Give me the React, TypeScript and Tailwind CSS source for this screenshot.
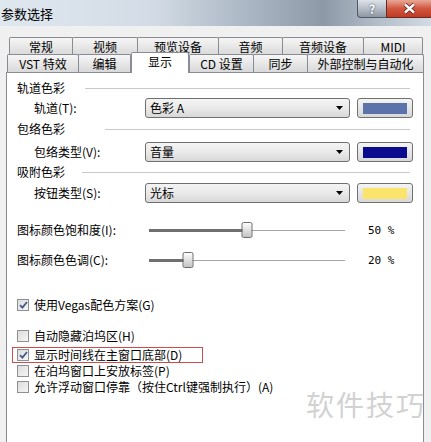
const FONT = "font-['Noto_Sans_CJK_SC','Microsoft_YaHei',sans-serif]";

const row1 = [
  { label: "常规", w: 64 },
  { label: "视频", w: 66 },
  { label: "预览设备", w: 82 },
  { label: "音频", w: 65 },
  { label: "音频设备", w: 82 },
  { label: "MIDI", w: 60 },
];

const row2 = [
  { label: "VST 特效", w: 72 },
  { label: "编辑", w: 53 },
  { label: "显示", w: 58, active: true },
  { label: "CD 设置", w: 65 },
  { label: "同步", w: 55 },
  { label: "外部控制与自动化", w: 117 },
];

function Tab({ label, w, active, first }: { label: string; w: number; active?: boolean; first?: boolean }) {
  if (active) {
    return (
      <div
        style={{ width: w }}
        className="relative z-10 -mb-px flex h-[21px] items-start justify-center rounded-t-[2px] border border-b-0 border-[#898c95] bg-white pt-[2px] text-[12px] leading-[14px] text-black"
      >
        {label}
      </div>
    );
  }
  return (
    <div
      style={{ width: w }}
      className={`flex h-[18px] items-center justify-center rounded-t-[2px] border border-b-0 border-[#898c95] bg-gradient-to-b from-[#f6f6f6] to-[#d9d9d9] pt-[1px] text-[12px] leading-none text-black ${first ? "" : "-ml-px"}`}
    >
      {label}
    </div>
  );
}

function GroupHeader({ label, lineLeft, mt }: { label: string; lineLeft: string; mt: string }) {
  return (
    <div className={`flex h-[14px] items-center pl-[10px] ${mt}`}>
      <span className="text-[12px] leading-none">{label}</span>
      <div className={`mr-[13px] h-px flex-1 bg-[#c9c9c9] ${lineLeft}`} />
    </div>
  );
}

function ColorRow({ label, value, swatch, mt }: { label: string; value: string; swatch: string; mt: string }) {
  return (
    <div className={`flex h-[20px] items-center ${mt}`}>
      <div className="w-[138px] pl-[27px] text-[12px] leading-none">{label}</div>
      <div className="flex h-[20px] w-[205px] items-center justify-between rounded-[3px] border border-[#707070] bg-gradient-to-b from-[#f4f4f4] via-[#eaeaea] to-[#d8d8d8] pl-[4px] pr-[6px] text-[12px] leading-none">
        <span>{value}</span>
        <svg width="7" height="4" viewBox="0 0 7 4">
          <path d="M0 0H7L3.5 4Z" fill="#000" />
        </svg>
      </div>
      <div className="ml-[7px] flex h-[20px] w-[56px] items-center justify-center rounded-[3px] border border-[#707070] bg-gradient-to-b from-[#f4f4f4] to-[#d8d8d8]">
        <div className={`h-[11px] w-[44px] ${swatch}`} />
      </div>
    </div>
  );
}

function SliderRow({ label, pct, mt }: { label: string; pct: number; mt: string }) {
  return (
    <div className={`flex h-[20px] items-center ${mt}`}>
      <div className="w-[142px] pl-[10px] text-[12px] leading-none">{label}</div>
      <div className="relative flex h-[20px] w-[196px] items-center">
        <div className="h-[3px] bg-[#6f6f6f]" style={{ width: `${pct}%` }} />
        <div className="h-px flex-1 bg-[#a5a5a5]" />
        <div
          className="absolute top-[2px] h-[16px] w-[11px] -translate-x-1/2 rounded-[2px] border border-[#6d6d6d] bg-gradient-to-b from-[#fdfdfd] to-[#c4c4c4]"
          style={{ left: `${pct}%` }}
        />
      </div>
      <div className="ml-[23px] font-['DejaVu_Sans_Mono',monospace] text-[11px] leading-none">{pct} %</div>
    </div>
  );
}

function Check({ checked }: { checked?: boolean }) {
  return (
    <div className="flex h-[12px] w-[12px] shrink-0 items-center justify-center border border-[#8f8f8f] bg-gradient-to-br from-[#dcdcdc] to-[#f6f6f6]">
      {checked && (
        <svg width="9" height="8" viewBox="0 0 9 8">
          <path d="M1 4.2L3.4 6.6L8 1" stroke="#45598a" strokeWidth="1.8" fill="none" />
        </svg>
      )}
    </div>
  );
}

function CheckRow({ label, checked, mt }: { label: string; checked?: boolean; mt: string }) {
  return (
    <div className={`flex h-[14px] items-center gap-[5px] pl-[10px] ${mt}`}>
      <Check checked={checked} />
      <span className="text-[12px] leading-none">{label}</span>
    </div>
  );
}

export default function App() {
  return (
    <div className={`relative flex h-[442px] w-[431px] flex-col overflow-hidden bg-[#f0f0f0] text-black ${FONT}`}>
      {/* title bar */}
      <div className="flex h-[27px] items-start justify-between border-b border-[#eef1f4] bg-[linear-gradient(90deg,#dfe7ef_0%,#d3dce6_35%,#a3afbd_62%,#8d99a7_75%,#b3bec9_88%,#d3dbe3_100%)]">
        <div className="pl-[1px] pt-[6px] text-[13px] leading-[15px]">参数选择</div>
        <div className="flex h-[18px]">
          <div className="flex w-[30px] items-center justify-center rounded-bl-[4px] border border-t-0 border-[#4f5a66] bg-gradient-to-b from-[#dfe4ea] via-[#b6bec8] to-[#8e98a4] text-[12px] font-bold leading-none text-white [text-shadow:0_0_2px_#303840]">
            ?
          </div>
          <div className="-ml-px flex w-[45px] items-center justify-center border border-t-0 border-r-0 border-[#6b2a22] bg-gradient-to-b from-[#e9a898] via-[#d0563f] to-[#c13a22]">
            <svg width="13" height="11" viewBox="0 0 13 11">
              <path d="M2 1.5L11 9.5M11 1.5L2 9.5" stroke="#5a1f16" strokeWidth="4" />
              <path d="M2 1.5L11 9.5M11 1.5L2 9.5" stroke="#fff" strokeWidth="2.4" />
            </svg>
          </div>
        </div>
      </div>

      {/* tabs */}
      <div className="mt-[10px] flex h-[17px] pl-[9px]">
        {row1.map((t, i) => (
          <Tab key={t.label} label={t.label} w={t.w} first={i === 0} />
        ))}
      </div>
      <div className="-mt-[2px] flex h-[20px] items-end pl-[7px]">
        {row2.map((t, i) => (
          <Tab key={t.label} label={t.label} w={t.w} active={t.active} first={i === 0 || t.active || i === 3} />
        ))}
      </div>

      {/* page */}
      <div className="ml-[6px] flex w-[418px] flex-1 flex-col border border-b-0 border-[#898c95] bg-white">
        <GroupHeader label="轨道色彩" lineLeft="ml-[20px]" mt="mt-[8px]" />
        <ColorRow label="轨道(T):" value="色彩 A" swatch="bg-[#5b73aa]" mt="mt-[3px]" />
        <GroupHeader label="包络色彩" lineLeft="ml-[40px]" mt="mt-[4px]" />
        <ColorRow label="包络类型(V):" value="音量" swatch="bg-[#0a0a8f]" mt="mt-[6px]" />
        <GroupHeader label="吸附色彩" lineLeft="ml-[17px]" mt="mt-[3px]" />
        <ColorRow label="按钮类型(S):" value="光标" swatch="bg-[#fbe46c]" mt="mt-[4px]" />

        <SliderRow label="图标颜色饱和度(I):" pct={50} mt="mt-[17px]" />
        <SliderRow label="图标颜色色调(C):" pct={20} mt="mt-[10px]" />

        <CheckRow label="使用Vegas配色方案(G)" checked mt="mt-[28px]" />
        <CheckRow label="自动隐藏泊坞区(H)" mt="mt-[17px]" />
        <div className="ml-[5px] mt-[4px] flex h-[16px] w-[191px] items-center gap-[5px] border border-[#cc4b4b] pl-[4px]">
          <Check checked />
          <span className="text-[12px] leading-none">显示时间线在主窗口底部(D)</span>
        </div>
        <CheckRow label="在泊坞窗口上安放标签(P)" mt="mt-[1px]" />
        <CheckRow label="允许浮动窗口停靠（按住Ctrl键强制执行）(A)" mt="mt-[2px]" />
      </div>

      {/* watermark */}
      <div className="pointer-events-none absolute left-[306px] top-[390px] text-[28px] leading-none tracking-[2px] text-[#d2d2d2]">
        软件技巧
      </div>
    </div>
  );
}
